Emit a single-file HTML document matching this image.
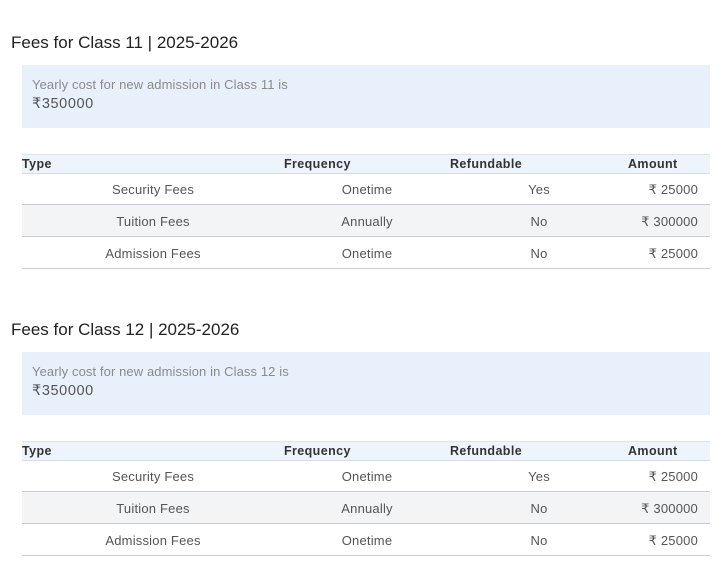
<!DOCTYPE html>
<html><head><meta charset="utf-8"><style>
body{margin:0;width:725px;height:586px;background:#fff;font-family:"Liberation Sans","DejaVu Sans",sans-serif;position:relative;overflow:hidden}
.s{position:absolute;left:0;width:725px;height:280px}
.t{position:absolute;left:11px;top:33px;font-size:17px;color:#222}
.b{position:absolute;left:22px;top:65px;width:688px;height:63px;background:#e8f1fb}
.b1{position:absolute;left:10px;top:12px;font-size:13px;color:#8a8a8a;letter-spacing:0.1px}
.b2{position:absolute;left:10px;top:31px;font-size:14.5px;color:#555;letter-spacing:0.6px}
.h{position:absolute;left:22px;top:154px;width:688px;height:18px;background:#eef4fb;border-top:1px solid #dde4ee;border-bottom:1px solid #d6dde8}
.h span{position:absolute;top:2px;font-size:12.5px;font-weight:bold;color:#333;letter-spacing:0.4px}
.r{position:absolute;left:22px;width:688px;height:31px;border-bottom:1px solid #c9ccd2;font-size:13px;color:#555;letter-spacing:0.2px}
.r span{position:absolute;top:9px}
.c1{left:131px;transform:translateX(-50%)}.c2{left:345px;transform:translateX(-50%)}.c3{left:517px;transform:translateX(-50%)}.c4{right:12px}
</style></head><body>
<div class="s" style="top:0">
<div class="t">Fees for Class 11 | 2025-2026</div>
<div class="b"><div class="b1">Yearly cost for new admission in Class 11 is</div><div class="b2">₹350000</div></div>
<div class="h"><span style="left:0">Type</span><span style="left:262px">Frequency</span><span style="left:428px">Refundable</span><span style="left:606px">Amount</span></div>
<div class="r" style="top:173px"><span class="c1">Security Fees</span><span class="c2">Onetime</span><span class="c3">Yes</span><span class="c4">₹ 25000</span></div>
<div class="r" style="top:205px;background:#f3f4f6"><span class="c1">Tuition Fees</span><span class="c2">Annually</span><span class="c3">No</span><span class="c4">₹ 300000</span></div>
<div class="r" style="top:237px"><span class="c1">Admission Fees</span><span class="c2">Onetime</span><span class="c3">No</span><span class="c4">₹ 25000</span></div>
</div>
<div class="s" style="top:287px">
<div class="t">Fees for Class 12 | 2025-2026</div>
<div class="b"><div class="b1">Yearly cost for new admission in Class 12 is</div><div class="b2">₹350000</div></div>
<div class="h"><span style="left:0">Type</span><span style="left:262px">Frequency</span><span style="left:428px">Refundable</span><span style="left:606px">Amount</span></div>
<div class="r" style="top:173px"><span class="c1">Security Fees</span><span class="c2">Onetime</span><span class="c3">Yes</span><span class="c4">₹ 25000</span></div>
<div class="r" style="top:205px;background:#f3f4f6"><span class="c1">Tuition Fees</span><span class="c2">Annually</span><span class="c3">No</span><span class="c4">₹ 300000</span></div>
<div class="r" style="top:237px"><span class="c1">Admission Fees</span><span class="c2">Onetime</span><span class="c3">No</span><span class="c4">₹ 25000</span></div>
</div>
</body></html>
